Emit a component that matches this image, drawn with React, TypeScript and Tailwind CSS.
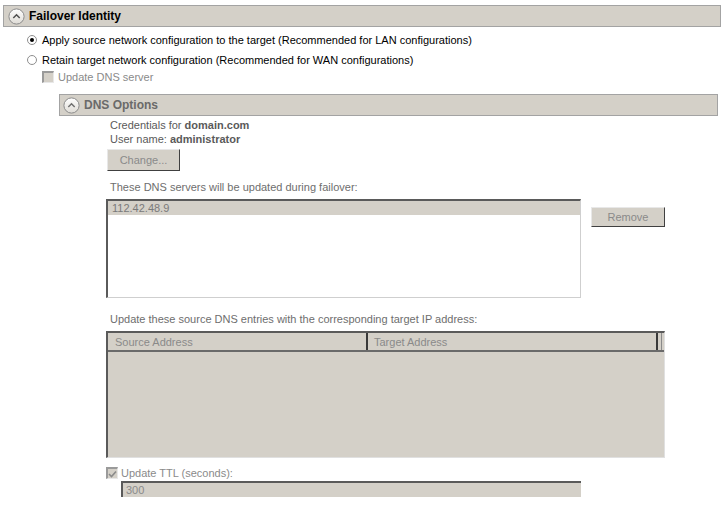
import React from 'react'

function CollapseIcon({ dim }: { dim?: boolean }) {
  return (
    <svg width="17" height="17" viewBox="0 0 17 17" className="shrink-0">
      <defs>
        <linearGradient id={dim ? 'gd' : 'gf'} x1="0" y1="0" x2="0" y2="1">
          <stop offset="0" stopColor="#ffffff" />
          <stop offset="1" stopColor="#dedbd5" />
        </linearGradient>
      </defs>
      <circle cx="8.5" cy="8.5" r="7.6" fill={`url(#${dim ? 'gd' : 'gf'})`} stroke="#8c8c8c" strokeWidth="1" />
      <path d="M5.3 10 L8.5 6.8 L11.7 10" fill="none" stroke={dim ? '#707070' : '#505050'} strokeWidth="1.5" />
    </svg>
  )
}

function Radio({ checked }: { checked?: boolean }) {
  return (
    <span className="w-[10px] h-[10px] rounded-full border border-[#8e8e8e] bg-white flex items-center justify-center shrink-0">
      {checked && <span className="w-[4px] h-[4px] rounded-full bg-black" />}
    </span>
  )
}

function Check({ checked }: { checked?: boolean }) {
  return (
    <span className="w-[12px] h-[12px] border-t-2 border-l-2 border-[#9a9a9a] border-r border-b border-r-[#e8e8e8] border-b-[#e8e8e8] bg-[#d4d0c8] flex items-center justify-center shrink-0">
      {checked && (
        <svg width="9" height="8" viewBox="0 0 9 8">
          <path d="M1 4 L3.5 6.5 L8 1.5" fill="none" stroke="#8a8a8a" strokeWidth="1.6" />
        </svg>
      )}
    </span>
  )
}

export default function App() {
  return (
    <div
      className="w-[728px] h-[515px] bg-white text-[11px] leading-[14px] text-black overflow-hidden pt-[5px] pl-[3px] pr-[7px]"
      style={{ fontFamily: '"Liberation Sans", Arial, sans-serif' }}
    >
      {/* Failover Identity */}
      <div className="h-[22px] border border-[#a3a3a3] bg-[#d4d0c8] flex items-center gap-[4px] pl-[4px]">
        <CollapseIcon />
        <span className="font-bold text-[12px]">Failover Identity</span>
      </div>

      <div className="mt-[6px] ml-[24px] flex items-center gap-[5px] h-[14px]">
        <Radio checked />
        <span>Apply source network configuration to the target (Recommended for LAN configurations)</span>
      </div>
      <div className="mt-[6px] ml-[24px] flex items-center gap-[5px] h-[14px]">
        <Radio />
        <span>Retain target network configuration (Recommended for WAN configurations)</span>
      </div>
      <div className="mt-[3px] ml-[39px] flex items-center gap-[4px] h-[14px] text-[#8a8a8a]">
        <Check />
        <span>Update DNS server</span>
      </div>

      {/* DNS Options */}
      <div className="mt-[10px] ml-[56px] mr-[3px] h-[22px] border border-[#a3a3a3] bg-[#d4d0c8] flex items-center gap-[4px] pl-[3px]">
        <CollapseIcon dim />
        <span className="font-bold text-[12px] text-[#6a6a6a]">DNS Options</span>
      </div>

      <div className="ml-[103px] text-[#5a5a5a]">
        <div className="mt-[2px] pl-[4px]">
          Credentials for <span className="font-bold">domain.com</span>
        </div>
        <div className="pl-[4px]">
          User name: <span className="font-bold">administrator</span>
        </div>
        <button className="mt-[3px] ml-[1px] w-[73px] h-[22px] bg-[#d4d0c8] border border-[#e8e8e8] border-r-[#404040] border-b-[#404040] text-[#8a8a8a] flex items-center justify-center">
          Change...
        </button>

        <div className="mt-[9px] pl-[4px] text-[#6e6e6e]">These DNS servers will be updated during failover:</div>
        <div className="mt-[5px] flex items-start">
          <div className="w-[475px] h-[99px] bg-white border-t-2 border-l-2 border-[#5a5a5a] border-r border-b border-r-[#cfcfcf] border-b-[#cfcfcf]">
            <div className="h-[14px] bg-[#d4d0c8] pl-[4px] text-[#7a7a7a]">112.42.48.9</div>
          </div>
          <button className="mt-[8px] ml-[10px] w-[74px] h-[20px] bg-[#d4d0c8] border border-[#e8e8e8] border-r-[#404040] border-b-[#404040] text-[#8a8a8a] flex items-center justify-center">
            Remove
          </button>
        </div>

        <div className="mt-[14px] pl-[4px] text-[#6e6e6e]">Update these source DNS entries with the corresponding target IP address:</div>
        <div className="mt-[5px] w-[559px] h-[127px] bg-[#d4d0c8] border-t-2 border-l-2 border-[#5a5a5a] border-r border-b border-r-[#e0e0e0] border-b-[#e0e0e0]">
          <div className="flex h-[19px] border-b-2 border-[#6a6a6a] text-[#8a8a8a]">
            <div className="w-[260px] pl-[7px] flex items-center border-r-2 border-[#3a3a3a]">Source Address</div>
            <div className="w-[290px] pl-[6px] flex items-center border-r-2 border-[#3a3a3a]">Target Address</div>
            <div className="w-[4px] border-r border-[#8a8a8a]" />
          </div>
        </div>

        <div className="mt-[8px] flex items-center gap-[3px] h-[14px] text-[#8a8a8a]">
          <Check checked />
          <span>Update TTL (seconds):</span>
        </div>
        <div className="mt-[1px] ml-[15px] w-[460px] h-[16px] bg-[#d4d0c8] border-t-2 border-l-2 border-[#5a5a5a] pl-[3px] text-[#8a8a8a] flex items-center">
          300
        </div>
      </div>
    </div>
  )
}
